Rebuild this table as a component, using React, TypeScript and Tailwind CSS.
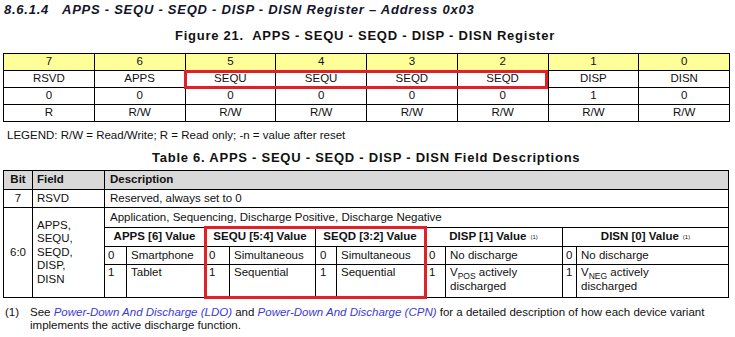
import React from "react";

const bits = ["7", "6", "5", "4", "3", "2", "1", "0"];
const names = ["RSVD", "APPS", "SEQU", "SEQU", "SEQD", "SEQD", "DISP", "DISN"];
const resets = ["0", "0", "0", "0", "0", "0", "1", "0"];
const access = ["R", "R/W", "R/W", "R/W", "R/W", "R/W", "R/W", "R/W"];

function RegRow({ items, yellow }: { items: string[]; yellow?: boolean }) {
  return (
    <>
      {items.map((t, i) => (
        <div
          key={i}
          className={`h-[17px] border-r border-b border-black flex items-center justify-center text-[11.5px] leading-none ${
            yellow ? "bg-[#ffff99]" : "bg-white"
          }`}
        >
          {t}
        </div>
      ))}
    </>
  );
}

function Sup() {
  return <span className="ml-[4px] text-[6px] font-normal align-[3px]">(1)</span>;
}

export default function App() {
  const cell = "border-r border-b border-black";
  const r1 = "h-[32px] pt-[1px] leading-[13.5px]";
  return (
    <div className="w-[735px] h-[337px] bg-white text-[#111] font-['Liberation_Sans',Arial,sans-serif] overflow-hidden pt-[2px]">
      {/* Section title */}
      <div className="flex pl-[4px] text-[13px] leading-[16px] font-bold italic text-[#14142a] tracking-[0.75px]">
        <span className="w-[58px]">8.6.1.4</span>
        <span>APPS - SEQU - SEQD - DISP - DISN Register – Address 0x03</span>
      </div>

      {/* Figure caption */}
      <div className="mt-[10px] pl-[175px] text-[13px] leading-[16px] font-bold whitespace-pre tracking-[0.75px]">
        {"Figure 21.  APPS - SEQU - SEQD - DISP - DISN Register"}
      </div>

      {/* Register table */}
      <div className="relative mt-[9px] ml-[3px] w-[727px]">
        <div className="grid grid-cols-8 border-l border-t border-black">
          <RegRow items={bits} yellow />
          <RegRow items={names} />
          <RegRow items={resets} />
          <RegRow items={access} />
        </div>
        <div className="absolute left-[181px] top-[17px] w-[364px] h-[19px] border-[3px] border-[#e2202a]" />
      </div>

      {/* Legend */}
      <div className="mt-[6px] pl-[7px] text-[11.5px] leading-[14px]">
        LEGEND: R/W = Read/Write; R = Read only; -n = value after reset
      </div>

      {/* Table caption */}
      <div className="mt-[8px] pl-[152px] text-[13px] leading-[16px] font-bold tracking-[0.75px]">
        Table 6. APPS - SEQU - SEQD - DISP - DISN Field Descriptions
      </div>

      {/* Field table */}
      <div className="relative mt-[4px] ml-[3px] w-[726px] text-[11.5px]">
        <div className="grid grid-cols-[29px_72px_624px] border-l border-t border-black">
          {/* header */}
          <div className={`${cell} h-[19px] bg-[#d9d9d9] font-bold flex items-center justify-center`}>Bit</div>
          <div className={`${cell} h-[19px] bg-[#d9d9d9] font-bold flex items-center pl-[4px]`}>Field</div>
          <div className={`${cell} h-[19px] bg-[#d9d9d9] font-bold flex items-center pl-[5px]`}>Description</div>

          {/* row 7 */}
          <div className={`${cell} h-[18px] flex items-center justify-center`}>7</div>
          <div className={`${cell} h-[18px] flex items-center pl-[4px]`}>RSVD</div>
          <div className={`${cell} h-[18px] flex items-center pl-[5px]`}>Reserved, always set to 0</div>

          {/* row 6:0 */}
          <div className={`${cell} h-[90px] flex items-center justify-center`}>6:0</div>
          <div className={`${cell} h-[90px] flex flex-col justify-center pl-[4px] leading-[13.5px]`}>
            <span>APPS,</span>
            <span>SEQU,</span>
            <span>SEQD,</span>
            <span>DISP,</span>
            <span>DISN</span>
          </div>
          <div className={`${cell} h-[90px] flex flex-col`}>
            <div className="h-[20px] border-b border-black flex items-center pl-[5px]">
              Application, Sequencing, Discharge Positive, Discharge Negative
            </div>
            <div className="grid grid-cols-[22px_78px_25px_86px_21px_88px_21px_117px_14px_151px]">
              {/* sub header */}
              <div className="col-span-2 h-[19px] border-r border-b border-black font-bold flex items-center justify-center">
                APPS [6] Value
              </div>
              <div className="col-span-2 h-[19px] border-r border-b border-black font-bold flex items-center justify-center">
                SEQU [5:4] Value
              </div>
              <div className="col-span-2 h-[19px] border-r border-b border-black font-bold flex items-center justify-center">
                SEQD [3:2] Value
              </div>
              <div className="col-span-2 h-[19px] border-r border-b border-black font-bold flex items-center justify-center">
                DISP [1] Value
                <Sup />
              </div>
              <div className="col-span-2 h-[19px] border-b border-black font-bold flex items-center justify-center">
                DISN [0] Value
                <Sup />
              </div>

              {/* row 0 */}
              <div className="h-[18px] border-r border-b border-black flex items-center pl-[3px]">0</div>
              <div className="h-[18px] border-r border-b border-black flex items-center pl-[4px]">Smartphone</div>
              <div className="h-[18px] border-r border-b border-black flex items-center pl-[4px]">0</div>
              <div className="h-[18px] border-r border-b border-black flex items-center pl-[4px]">Simultaneous</div>
              <div className="h-[18px] border-r border-b border-black flex items-center pl-[4px]">0</div>
              <div className="h-[18px] border-r border-b border-black flex items-center pl-[4px]">Simultaneous</div>
              <div className="h-[18px] border-r border-b border-black flex items-center pl-[4px]">0</div>
              <div className="h-[18px] border-r border-b border-black flex items-center pl-[4px]">No discharge</div>
              <div className="h-[18px] border-r border-b border-black flex items-center pl-[3px]">0</div>
              <div className="h-[18px] border-b border-black flex items-center pl-[4px]">No discharge</div>

              {/* row 1 */}
              <div className={`${r1} border-r border-black pl-[3px]`}>1</div>
              <div className={`${r1} border-r border-black pl-[4px]`}>Tablet</div>
              <div className={`${r1} border-r border-black pl-[4px]`}>1</div>
              <div className={`${r1} border-r border-black pl-[4px]`}>Sequential</div>
              <div className={`${r1} border-r border-black pl-[4px]`}>1</div>
              <div className={`${r1} border-r border-black pl-[4px]`}>Sequential</div>
              <div className={`${r1} border-r border-black pl-[4px]`}>1</div>
              <div className={`${r1} border-r border-black pl-[4px]`}>
                V<sub className="text-[8.5px] leading-none align-[-1px]">POS</sub> actively
                <br />
                discharged
              </div>
              <div className={`${r1} border-r border-black pl-[3px]`}>1</div>
              <div className={`${r1} pl-[4px]`}>
                V<sub className="text-[8.5px] leading-none align-[-1px]">NEG</sub> actively
                <br />
                discharged
              </div>
            </div>
          </div>
        </div>
        <div className="absolute left-[201px] top-[56px] w-[223px] h-[73px] border-[3px] border-[#e2202a]" />
      </div>

      {/* Footnote */}
      <div className="mt-[8px] flex text-[11.5px] leading-[12.5px]">
        <span className="w-[30px] pl-[5px] shrink-0">(1)</span>
        <span>
          See <span className="italic text-[#3a3ad8]">Power-Down And Discharge (LDO)</span> and{" "}
          <span className="italic text-[#3a3ad8]">Power-Down And Discharge (CPN)</span> for a detailed description of how
          each device variant
          <br />
          implements the active discharge function.
        </span>
      </div>
    </div>
  );
}
